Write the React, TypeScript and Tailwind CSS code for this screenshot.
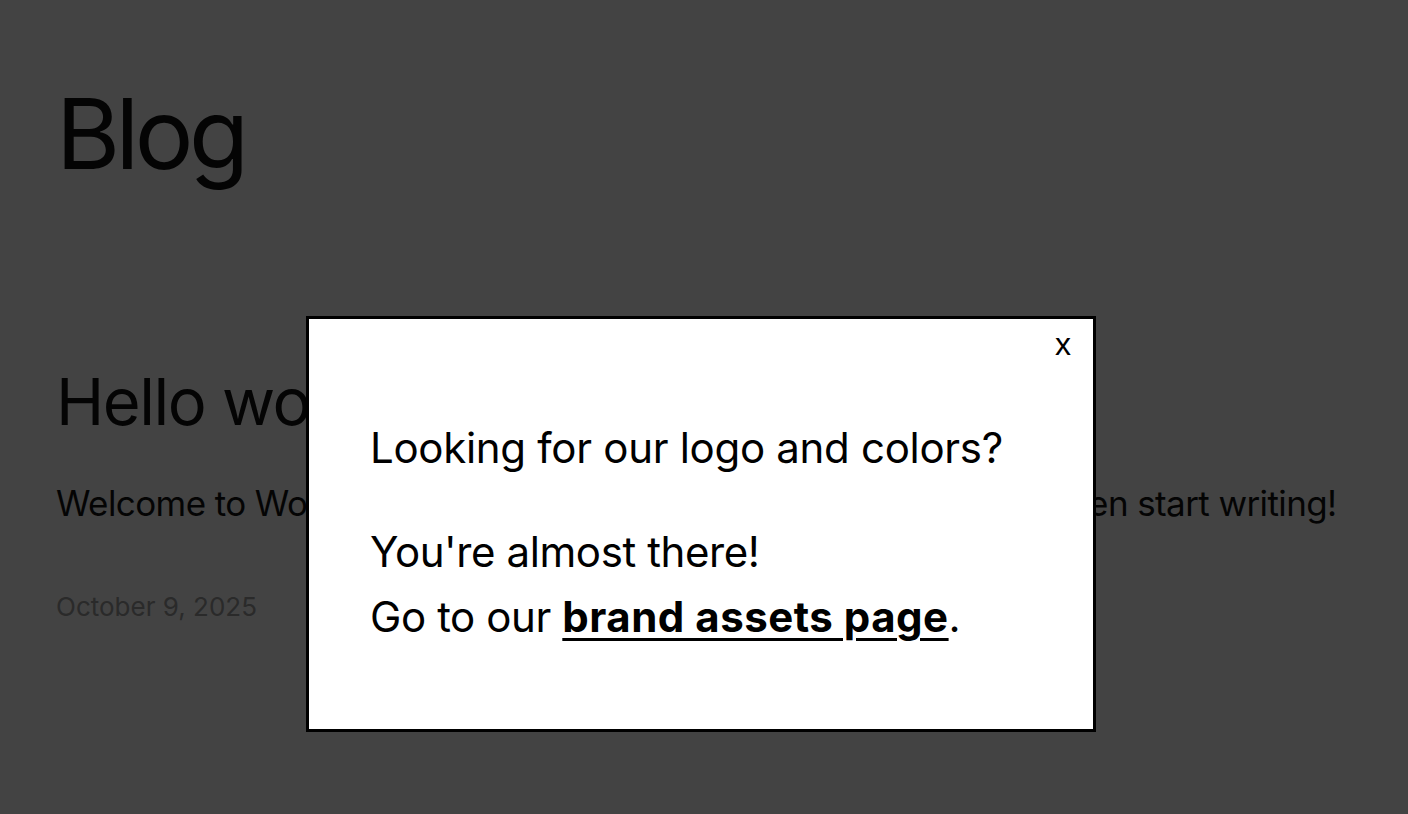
export default function App() {
  return (
    <div className="relative min-h-[814px] bg-white font-['Inter',sans-serif] text-[#111111]">
      <main className="px-[56px] pt-[85px]">
        <h1 className="text-[98px] leading-[98px] font-normal tracking-[-4.5px]">Blog</h1>

        <article className="mt-[186px]">
          <h2 className="text-[65px] leading-[65px] font-normal tracking-[-1.5px]">Hello world!</h2>
          <p className="mt-[52px] text-[35px] leading-[35px] tracking-[-0.6px] whitespace-nowrap">
            Welcome to WordPress. This is your first post. Edit or delete it, then start writing!
          </p>
          <p className="mt-[73px] text-[26px] leading-[26px] tracking-[0px] text-[#a0a0a0]">October 9, 2025</p>
        </article>
      </main>

      {/* overlay */}
      <div className="fixed inset-0 bg-black/[0.737]" />

      {/* modal */}
      <div className="fixed left-[306px] top-[316px] w-[790px] border-[3px] border-black bg-white text-black">
        <button className="absolute right-[22px] top-[9px] font-['Liberation_Sans',sans-serif] text-[32px] leading-[32px]">
          x
        </button>
        <div className="px-[61px] pt-[108px] pb-[80px]">
          <h3 className="text-[42px] leading-[42px] font-normal tracking-[-0.3px]">Looking for our logo and colors?</h3>
          <p className="mt-[50px] text-[42px] leading-[65px] tracking-[-0.4px]">
            You're almost there!
            <br />
            Go to our{' '}
            <a href="#" className="font-bold tracking-[0.5px] underline decoration-[3px] underline-offset-[6px]">
              brand assets page
            </a>
            .
          </p>
        </div>
      </div>
    </div>
  );
}
